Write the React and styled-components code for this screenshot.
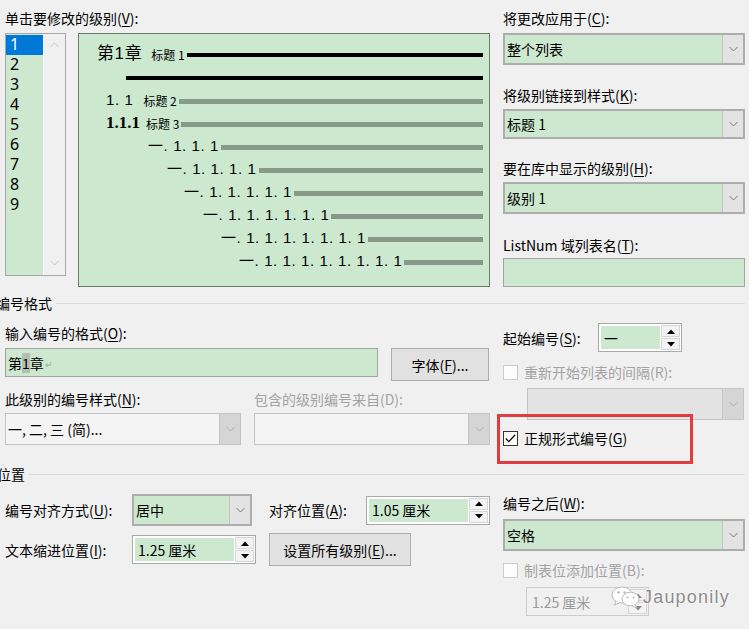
import React from "react";
import styled, { createGlobalStyle } from "styled-components";

const GREEN = "#cce8cf";

const GlobalStyle = createGlobalStyle`
  html, body {
    margin: 0;
    padding: 0;
    background: #f0f0f0;
  }
  body {
    font-family: "Noto Sans CJK SC", "Liberation Sans", sans-serif;
    font-size: 14px;
    color: #000;
  }
  u {
    text-decoration-thickness: 1px;
    text-underline-offset: 2px;
  }
`;

const Dialog = styled.div`
  position: relative;
  box-sizing: border-box;
  width: 749px;
  height: 629px;
  overflow: hidden;
  padding: 8px 4px 0 5px;
  background: #f0f0f0;
`;

const Columns = styled.div`
  display: grid;
  grid-template-columns: 485px 242px;
  column-gap: 13px;
  margin-top: ${p => p.$mt || 0}px;
`;

const Column = styled.div`
  position: relative;
  display: flex;
  flex-direction: column;
`;

const Label = styled.div`
  height: 20px;
  line-height: 20px;
  white-space: nowrap;
  color: ${p => (p.$disabled ? "#a3a3a3" : "#000")};
  margin-top: ${p => p.$mt || 0}px;
  width: ${p => (p.$w ? `${p.$w}px` : "auto")};
  flex-shrink: 0;
`;

/* ---------- level list ---------- */

const TopRow = styled.div`
  display: flex;
  align-items: flex-start;
  margin-top: 5px;
`;

const LevelList = styled.div`
  box-sizing: border-box;
  display: flex;
  width: 61px;
  height: 243px;
  border: 1px solid #a8a8a8;
  background: #fff;
`;

const LevelItems = styled.div`
  width: 37px;
  background: ${GREEN};
  padding-top: 1px;
`;

const LevelItem = styled.div`
  height: 20px;
  line-height: 19px;
  padding-left: 4px;
  font-family: "Noto Sans", "Liberation Sans", sans-serif;
  font-size: 16px;
  color: ${p => (p.$active ? "#fff" : "#000")};
  background: ${p => (p.$active ? "#0078d7" : "transparent")};
`;

const ScrollTrack = styled.div`
  flex: 1;
  display: flex;
  flex-direction: column;
  justify-content: space-between;
  align-items: center;
  padding: 8px 0 9px;
  background: #f0f0f0;
  border-left: 1px solid #fff;
`;

/* ---------- preview ---------- */

const Preview = styled.div`
  box-sizing: border-box;
  width: 412px;
  height: 254px;
  margin-left: 12px;
  padding: 8px 6px 0 0;
  border: 1px solid #6e7a6e;
  background: ${GREEN};
`;

const PreviewRow = styled.div`
  display: flex;
  align-items: center;
  height: 23px;
  padding-left: ${p => p.$indent}px;
  white-space: nowrap;
`;

const PreviewNum = styled.span`
  font-family: ${p =>
    p.$kind === "h3"
      ? '"Liberation Serif", "Noto Sans CJK SC", serif'
      : '"Liberation Sans", "Noto Sans CJK SC", sans-serif'};
  font-size: ${p => (p.$kind === "h1" ? 17 : p.$kind === "h3" ? 17 : 15)}px;
  font-weight: ${p => (p.$kind === "h3" ? 700 : 400)};
  letter-spacing: ${p => (p.$kind === "h3" ? 0 : 0.6)}px;
  line-height: 20px;
`;

const PreviewTag = styled.span`
  margin-left: ${p => p.$gap}px;
  font-size: 12px;
  line-height: 14px;
  padding-top: 3px;
`;

const PreviewBar = styled.div`
  flex: 1;
  height: ${p => (p.$dark ? 4 : 5)}px;
  margin-left: 2px;
  margin-top: ${p => (p.$dark ? 2 : 3)}px;
  background: ${p => (p.$dark ? "#000" : "#869a87")};
`;

/* ---------- form controls ---------- */

const Select = styled.div`
  box-sizing: border-box;
  display: flex;
  width: ${p => (p.$w ? `${p.$w}px` : "100%")};
  height: ${p => p.$h || 32}px;
  margin-top: ${p => p.$mt || 0}px;
  margin-left: ${p => p.$ml || 0}px;
  border: ${p => (p.$plain ? "1px solid #c3c3c3" : "2px solid #adadad")};
  background: ${p => (p.$plain ? p.$plain : GREEN)};
  flex-shrink: 0;
`;

const SelectValue = styled.div`
  flex: 1;
  display: flex;
  align-items: center;
  padding-left: 2px;
  white-space: nowrap;
  overflow: hidden;
`;

const DropButton = styled.div`
  display: flex;
  align-items: center;
  justify-content: center;
  width: 20px;
  background: ${p => (p.$muted ? "#d5d5d5" : "#e3e3e3")};
  border-left: 1px solid #c4c4c4;
`;

const TextBox = styled.div`
  box-sizing: border-box;
  display: flex;
  align-items: center;
  width: ${p => (p.$w ? `${p.$w}px` : "100%")};
  height: ${p => p.$h || 29}px;
  margin-top: ${p => p.$mt || 0}px;
  padding-left: 2px;
  border: 1px solid #a3a3a3;
  background: ${GREEN};
  white-space: nowrap;
  flex-shrink: 0;
`;

const Highlight = styled.span`
  background: #b5beb5;
`;

const ReturnMark = styled.span`
  margin-left: 1px;
  font-size: 9px;
  color: #9aa79a;
  align-self: center;
  padding-top: 3px;
`;

const Spin = styled.div`
  box-sizing: border-box;
  display: flex;
  width: ${p => p.$w}px;
  height: ${p => p.$h || 29}px;
  margin-left: ${p => p.$ml || 0}px;
  margin-top: ${p => p.$mt || 0}px;
  border: 1px solid ${p => (p.$disabled ? "#cccccc" : "#a8a8a8")};
  background: ${p => (p.$disabled ? "#f0f0f0" : "#fff")};
  flex-shrink: 0;
`;

const SpinValue = styled.div`
  flex: 1;
  display: flex;
  align-items: center;
  padding-left: 3px;
  margin: 2px 0 2px 2px;
  background: ${p => (p.$disabled ? "transparent" : GREEN)};
  color: ${p => (p.$disabled ? "#9a9a9a" : "#000")};
  white-space: nowrap;
`;

const SpinButtons = styled.div`
  display: flex;
  flex-direction: column;
  width: 19px;
  margin: 1px;
`;

const SpinButton = styled.div`
  flex: 1;
  display: flex;
  align-items: center;
  justify-content: center;
  border: 1px solid #d6d6d6;
  background: #f3f3f3;
  & + & {
    margin-top: 1px;
  }
`;

const PushButton = styled.div`
  box-sizing: border-box;
  display: flex;
  align-items: center;
  justify-content: center;
  width: ${p => p.$w}px;
  height: 33px;
  margin-left: ${p => p.$ml || 0}px;
  border: 1px solid #adadad;
  background: #e1e1e1;
  white-space: nowrap;
  flex-shrink: 0;
`;

const Row = styled.div`
  display: flex;
  align-items: ${p => p.$align || "center"};
  margin-top: ${p => p.$mt || 0}px;
`;

const Pair = styled.div`
  display: grid;
  grid-template-columns: 236px 236px;
  column-gap: 13px;
  margin-top: ${p => p.$mt || 0}px;
`;

const CheckRow = styled.label`
  display: flex;
  align-items: center;
  height: 20px;
  margin-top: ${p => p.$mt || 0}px;
  color: ${p => (p.$disabled ? "#a3a3a3" : "#000")};
  white-space: nowrap;
`;

const CheckBox = styled.span`
  box-sizing: border-box;
  display: inline-flex;
  align-items: center;
  justify-content: center;
  width: 15px;
  height: 15px;
  margin-right: 6px;
  border: 1px solid ${p => (p.$disabled ? "#cccccc" : "#333")};
  background: ${p => (p.$disabled ? "#fcfcfc" : "#fff")};
`;

const Annotation = styled.div`
  position: absolute;
  left: -6px;
  top: 91px;
  width: 196px;
  height: 50px;
  box-sizing: border-box;
  border: 3px solid #e23c40;
  pointer-events: none;
`;

/* ---------- sections ---------- */

const SectionHead = styled.div`
  display: flex;
  align-items: center;
  height: 20px;
  margin-top: ${p => p.$mt || 0}px;
  margin-left: ${p => p.$shift}px;
`;

const SectionTitle = styled.span`
  white-space: nowrap;
  line-height: 20px;
`;

const SectionRule = styled.div`
  flex: 1;
  margin-left: 4px;
  border-top: 1px solid #dadada;
  margin-top: 1px;
`;

const PositionGrid = styled.div`
  display: grid;
  grid-template-columns: 127px 137px 97px 124px;
  grid-template-rows: 32px 33px;
  row-gap: 7px;
  align-items: center;
`;

const Span2 = styled.div`
  grid-column: span 2;
`;

/* ---------- watermark ---------- */

const Watermark = styled.div`
  position: absolute;
  left: 611px;
  top: 585px;
  display: flex;
  align-items: center;
  pointer-events: none;
`;

const WatermarkText = styled.span`
  margin-left: 2px;
  font-family: "Liberation Sans", sans-serif;
  font-size: 18px;
  letter-spacing: 1.2px;
  color: #8c8c8c;
  text-shadow: 0 0 2px #fff, 0 0 2px #fff;
`;

/* ---------- drawings ---------- */

const Chevron = ({ up, color = "#808080" }) => (
  <svg width="9" height="6" viewBox="0 0 9 6">
    <polyline
      points={up ? "0.5,5 4.5,1 8.5,5" : "0.5,1 4.5,5 8.5,1"}
      fill="none"
      stroke={color}
      strokeWidth="1"
    />
  </svg>
);

const Triangle = ({ up, color = "#000" }) => (
  <svg width="8" height="5" viewBox="0 0 8 5">
    <polygon points={up ? "0,5 4,0.5 8,5" : "0,0 8,0 4,4.5"} fill={color} />
  </svg>
);

const Tick = () => (
  <svg width="11" height="9" viewBox="0 0 11 9">
    <polyline points="0.8,4.5 3.8,7.6 10.2,0.8" fill="none" stroke="#000" strokeWidth="1.3" />
  </svg>
);

const WeChatMark = () => (
  <svg width="30" height="24" viewBox="0 0 30 24">
    <ellipse cx="11" cy="10" rx="10" ry="8" fill="#fff" stroke="#b9b9b9" strokeWidth="1" />
    <path d="M5 16 L3.5 20 L9 17.5" fill="#fff" stroke="#b9b9b9" strokeWidth="1" />
    <ellipse cx="19.5" cy="14" rx="8.5" ry="6.8" fill="#fff" stroke="#b9b9b9" strokeWidth="1" />
    <path d="M24 19.5 L26 23 L21 20.5" fill="#fff" stroke="#b9b9b9" strokeWidth="1" />
    <circle cx="7.5" cy="7.5" r="1.2" fill="#b9b9b9" />
    <circle cx="13.5" cy="7.5" r="1.2" fill="#b9b9b9" />
    <circle cx="16.5" cy="12.5" r="1" fill="#b9b9b9" />
    <circle cx="22.5" cy="12.5" r="1" fill="#b9b9b9" />
  </svg>
);

/* ---------- data ---------- */

const levels = [1, 2, 3, 4, 5, 6, 7, 8, 9];

const previewRows = [
  { indent: 18, num: "第1章", kind: "h1", tag: "标题 1", gap: 9, dark: true },
  { indent: 45, dark: true },
  { indent: 27, num: "1. 1", kind: "h2", tag: "标题 2", gap: 10 },
  { indent: 27, num: "1.1.1", kind: "h3", tag: "标题 3", gap: 6 },
  { indent: 69, num: "一. 1. 1. 1" },
  { indent: 88, num: "一. 1. 1. 1. 1" },
  { indent: 105, num: "一. 1. 1. 1. 1. 1" },
  { indent: 124, num: "一. 1. 1. 1. 1. 1. 1" },
  { indent: 142, num: "一. 1. 1. 1. 1. 1. 1. 1" },
  { indent: 160, num: "一. 1. 1. 1. 1. 1. 1. 1. 1" }
];

/* ---------- small composites ---------- */

const Combo = ({ value, h, w, mt, ml, plain, muted }) => (
  <Select $h={h} $w={w} $mt={mt} $ml={ml} $plain={plain}>
    <SelectValue>{value}</SelectValue>
    <DropButton $muted={muted}>
      <Chevron color={muted ? "#b0b0b0" : "#7a7a7a"} />
    </DropButton>
  </Select>
);

const SpinBox = ({ value, w, h, ml, mt, disabled }) => (
  <Spin $w={w} $h={h} $ml={ml} $mt={mt} $disabled={disabled}>
    <SpinValue $disabled={disabled}>{value}</SpinValue>
    <SpinButtons>
      <SpinButton>
        <Triangle up color={disabled ? "#888" : "#000"} />
      </SpinButton>
      <SpinButton>
        <Triangle color={disabled ? "#888" : "#000"} />
      </SpinButton>
    </SpinButtons>
  </Spin>
);

const App = () => {
  return (
    <Dialog>
      <GlobalStyle />

      <Columns>
        <Column>
          <Label>
            单击要修改的级别(<u>V</u>):
          </Label>
          <TopRow>
            <LevelList>
              <LevelItems>
                {levels.map(n => (
                  <LevelItem key={n} $active={n === 1}>
                    {n}
                  </LevelItem>
                ))}
              </LevelItems>
              <ScrollTrack>
                <Chevron up color="#c4c4c4" />
                <Chevron color="#c4c4c4" />
              </ScrollTrack>
            </LevelList>
            <Preview>
              {previewRows.map((row, i) => (
                <PreviewRow key={i} $indent={row.indent}>
                  {row.num && <PreviewNum $kind={row.kind}>{row.num}</PreviewNum>}
                  {row.tag && <PreviewTag $gap={row.gap}>{row.tag}</PreviewTag>}
                  <PreviewBar $dark={row.dark} />
                </PreviewRow>
              ))}
            </Preview>
          </TopRow>
        </Column>

        <Column>
          <Label>
            将更改应用于(<u>C</u>):
          </Label>
          <Combo value="整个列表" mt={5} h={32} />
          <Label $mt={20}>
            将级别链接到样式(<u>K</u>):
          </Label>
          <Combo value="标题 1" mt={4} h={30} />
          <Label $mt={19}>
            要在库中显示的级别(<u>H</u>):
          </Label>
          <Combo value="级别 1" mt={4} h={32} />
          <Label $mt={21}>
            ListNum 域列表名(<u>T</u>):
          </Label>
          <TextBox $mt={3} $h={29} />
        </Column>
      </Columns>

      <SectionHead $mt={6} $shift={-9}>
        <SectionTitle>编号格式</SectionTitle>
        <SectionRule />
      </SectionHead>

      <Columns $mt={10}>
        <Column>
          <Label>
            输入编号的格式(<u>O</u>):
          </Label>
          <Row $mt={5} $align="flex-start">
            <TextBox $w={373} $h={29}>
              第<Highlight>1</Highlight>章<ReturnMark>↵</ReturnMark>
            </TextBox>
            <PushButton $w={98} $ml={13}>
              字体(<u>F</u>)...
            </PushButton>
          </Row>
          <Pair $mt={8}>
            <Label>
              此级别的编号样式(<u>N</u>):
            </Label>
            <Label $disabled>包含的级别编号来自(D):</Label>
          </Pair>
          <Pair $mt={4}>
            <Combo value="一, 二, 三 (简)..." h={32} plain="#f4f4f4" muted />
            <Combo value="" h={32} plain="#f4f4f4" muted />
          </Pair>
        </Column>

        <Column>
          <Row>
            <Label $w={95}>
              起始编号(<u>S</u>):
            </Label>
            <SpinBox value="一" w={84} h={29} />
          </Row>
          <CheckRow $mt={10} $disabled>
            <CheckBox $disabled />
            重新开始列表的间隔(R):
          </CheckRow>
          <Combo value="" mt={6} ml={24} w={217} h={32} plain="#e3e3e3" muted />
          <CheckRow $mt={8}>
            <CheckBox>
              <Tick />
            </CheckBox>
            正规形式编号(<u>G</u>)
          </CheckRow>
          <Annotation />
        </Column>
      </Columns>

      <SectionHead $mt={16} $shift={-8}>
        <SectionTitle>位置</SectionTitle>
        <SectionRule />
      </SectionHead>

      <Columns $mt={10}>
        <Column>
          <PositionGrid>
            <Label>
              编号对齐方式(<u>U</u>):
            </Label>
            <Combo value="居中" w={120} h={32} />
            <Label>
              对齐位置(<u>A</u>):
            </Label>
            <SpinBox value="1.05 厘米" w={124} h={29} />
            <Label>
              文本缩进位置(<u>I</u>):
            </Label>
            <SpinBox value="1.25 厘米" w={124} h={29} />
            <Span2>
              <PushButton $w={142}>
                设置所有级别(<u>E</u>)...
              </PushButton>
            </Span2>
          </PositionGrid>
        </Column>

        <Column>
          <Label $mt={-1}>
            编号之后(<u>W</u>):
          </Label>
          <Combo value="空格" mt={6} h={32} />
          <CheckRow $mt={9} $disabled>
            <CheckBox $disabled />
            制表位添加位置(B):
          </CheckRow>
          <SpinBox value="1.25 厘米" w={123} h={29} ml={23} mt={7} disabled />
        </Column>
      </Columns>

      <Watermark>
        <WeChatMark />
        <WatermarkText>Jauponily</WatermarkText>
      </Watermark>
    </Dialog>
  );
};

export default App;
